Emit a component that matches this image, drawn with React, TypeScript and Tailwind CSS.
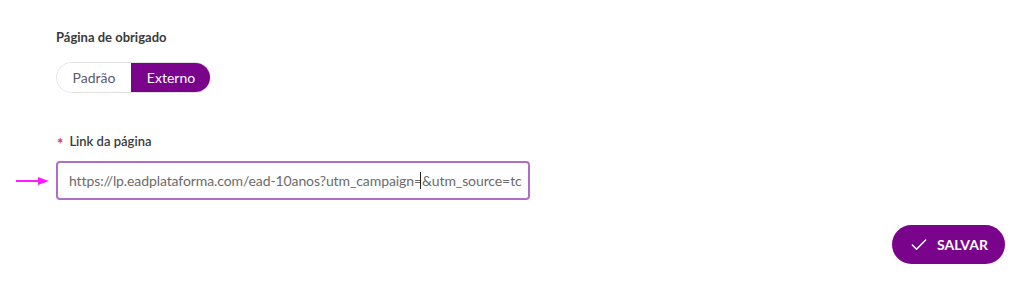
import { Check } from "lucide-react";

function PageToggle() {
  return (
    <div className="inline-flex h-[31px] rounded-full border border-[#e2e2e2] overflow-hidden text-[14px]">
      <button className="w-[74px] text-[#5b5b6b] bg-white">Padrão</button>
      <button className="w-[80px] -my-px -mr-px rounded-r-full bg-[#7a038c] text-white">Externo</button>
    </div>
  );
}

function LinkField() {
  return (
    <div className="flex items-center">
      <div className="w-[56px] flex items-center pl-[16px]">
        <svg width="33" height="10" viewBox="0 0 33 10">
          <line x1="0" y1="5" x2="24" y2="5" stroke="#ff1aff" strokeWidth="2" />
          <polygon points="22,1 33,5 22,9" fill="#ff1aff" />
        </svg>
      </div>
      <div className="w-[474px] h-[39px] flex items-center pl-[11px] rounded-[4px] border-2 border-[#b06fc6] text-[14px] tracking-[-0.1px] text-[#6b6b6b] overflow-hidden whitespace-nowrap">
        <span>https://lp.eadplataforma.com/ead-10anos?utm_campaign=</span>
        <span className="inline-block w-px h-[17px] bg-[#222] -ml-[2px] mr-[1px]" />
        <span>&amp;utm_source=tc</span>
      </div>
    </div>
  );
}

export default function App() {
  return (
    <div className="w-[1024px] h-[289px] bg-white font-['Lato',sans-serif] relative">
      <div className="pt-[29px] pl-[56px]">
        <h3 className="text-[13px] font-bold text-[#3a3a3a] leading-[16px]">Página de obrigado</h3>
        <div className="mt-[17px]">
          <PageToggle />
        </div>
        <div className="mt-[40px] h-[16px] flex items-center gap-[6px] text-[13px] font-semibold text-[#3a3a3a] leading-[16px]">
          <span className="text-[#e0304a] text-[15px] font-bold leading-none pl-[1px] translate-y-[2px]">*</span>
          <span>Link da página</span>
        </div>
      </div>
      <div className="mt-[12px]">
        <LinkField />
      </div>
      <div className="flex justify-end pr-[19px] mt-[25px]">
        <button className="h-[39px] w-[113px] rounded-full bg-[#7a038c] text-white flex items-center justify-center gap-[8px] text-[14px] font-bold">
          <Check size={20} strokeWidth={1.75} />
          SALVAR
        </button>
      </div>
    </div>
  );
}
